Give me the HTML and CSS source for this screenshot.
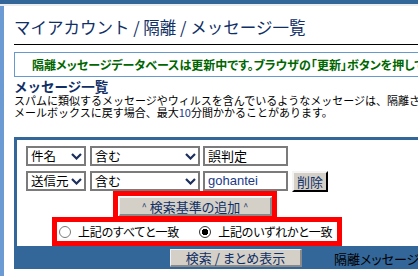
FILE: index.html
```html
<!DOCTYPE html>
<html lang="ja">
<head>
  <meta charset="UTF-8">
  <title>メッセージ一覧</title>
  <link rel="stylesheet" href="styles.css">
</head>
<body>
  <div class="topbar"></div>
  <div class="strip"></div>

  <div class="layout">
    <div class="sidebar"></div>

    <div class="main">
      <h1 class="title">マイアカウント / 隔離 / メッセージ一覧</h1>

      <div class="notice">隔離メッセージデータベースは更新中です。ブラウザの「更新」ボタンを押して最新の状態を表示してください。</div>

      <h2 class="section">メッセージ一覧</h2>
      <p class="desc">スパムに類似するメッセージやウィルスを含んでいるようなメッセージは、隔離されます。隔離されたメッセージを<br>メールボックスに戻す場合、最大<span class="num">10</span>分間かかることがあります。</p>

      <div class="search">
        <div class="search-body">
          <div class="row">
            <div class="sel sel-field"><span>件名</span>
              <svg class="chev" width="11" height="7" viewBox="0 0 11 7"><path d="M1 1 L5.5 5.5 L10 1" fill="none" stroke="#1c2f5c" stroke-width="2.2"/></svg>
            </div>
            <div class="sel sel-op"><span>含む</span>
              <svg class="chev" width="11" height="7" viewBox="0 0 11 7"><path d="M1 1 L5.5 5.5 L10 1" fill="none" stroke="#1c2f5c" stroke-width="2.2"/></svg>
            </div>
            <div class="field">誤判定</div>
          </div>

          <div class="row">
            <div class="sel sel-field"><span>送信元</span>
              <svg class="chev" width="11" height="7" viewBox="0 0 11 7"><path d="M1 1 L5.5 5.5 L10 1" fill="none" stroke="#1c2f5c" stroke-width="2.2"/></svg>
            </div>
            <div class="sel sel-op"><span>含む</span>
              <svg class="chev" width="11" height="7" viewBox="0 0 11 7"><path d="M1 1 L5.5 5.5 L10 1" fill="none" stroke="#1c2f5c" stroke-width="2.2"/></svg>
            </div>
            <div class="field field-value">gohantei</div>
            <button class="btn btn-del">削除</button>
          </div>

          <div class="add-wrap">
            <button class="btn btn-add"><span class="caret">^</span> 検索基準の追加 <span class="caret">^</span></button>
          </div>

          <div class="match-wrap">
            <span class="radio"></span>
            <span class="match-label">上記のすべてと一致</span>
            <span class="radio checked"></span>
            <span class="match-label">上記のいずれかと一致</span>
          </div>
        </div>

        <div class="search-foot">
          <button class="btn btn-search">検索 / まとめ表示</button>
          <span class="foot-text">隔離メッセージの表示件数</span>
        </div>
      </div>
    </div>
  </div>
</body>
</html>
```

FILE: styles.css
```css
body {
  margin: 0;
  background: #fff;
  font-family: "Noto Sans CJK JP", "Liberation Sans", sans-serif;
  font-feature-settings: "palt";
  overflow: hidden;
  width: 418px;
  height: 276px;
}

.topbar {
  height: 4px;
  background: #336699;
}

.strip {
  height: 2px;
  background: #ececec;
}

.layout {
  display: flex;
  height: 270px;
}

.sidebar {
  width: 4px;
  flex: none;
  background: #6b9bd2;
}

.main {
  flex: none;
  width: 700px;
  padding-left: 10px;
}

.title {
  margin: 0;
  padding: 8px 0 4px;
  line-height: 26px;
  font-size: 16.5px;
  font-weight: normal;
  font-feature-settings: normal;
  color: #0f2f66;
  border-bottom: 1px solid #000;
  white-space: nowrap;
}

.notice {
  margin-top: 7px;
  height: 23px;
  line-height: 23px;
  padding-left: 17px;
  border: 1px solid #6699cc;
  border-right: none;
  font-size: 12px;
  font-weight: bold;
  color: #006600;
  white-space: nowrap;
}

.section {
  margin: 2px 0 0;
  line-height: 15px;
  font-size: 13.5px;
  font-weight: bold;
  font-feature-settings: normal;
  color: #0f2f66;
}

.desc {
  margin: 0;
  font-size: 11px;
  line-height: 12px;
  font-feature-settings: normal;
  color: #000;
  white-space: nowrap;
}

.desc .num {
  color: #1a3a8a;
}

.search {
  margin-top: 19px;
  border: 3px solid #336699;
  border-bottom: none;
  border-right: none;
}

.search-body {
  padding: 6px 0 0 9px;
  background: #fff;
}

.row {
  display: flex;
  gap: 4px;
  height: 20px;
  margin-bottom: 5px;
}

.row + .row {
  margin-bottom: 0;
}

.sel,
.field {
  box-sizing: border-box;
  height: 20px;
  border: 2px solid #7b7b7b;
  font-size: 13px;
  line-height: 16px;
  padding-left: 3px;
  color: #000;
  background: #fff;
  white-space: nowrap;
}

.sel {
  display: flex;
  align-items: center;
  justify-content: space-between;
  padding: 0 2px 0 3px;
}

.sel-field {
  width: 60px;
  font-size: 12.5px;
}

.chev {
  flex: none;
}

.sel-op {
  width: 110px;
}

.field {
  width: 85px;
  margin-left: -1px;
}

.field-value {
  color: #1a3a8a;
  font-family: "Liberation Sans", sans-serif;
}

.btn {
  font-family: "Noto Sans CJK JP", "Liberation Sans", sans-serif;
  font-feature-settings: "palt";
  font-size: 13px;
  color: #0f2f66;
  background: #d4d0c8;
  padding: 0;
  border: 2px solid;
  border-color: #fff #404040 #404040 #fff;
  box-sizing: border-box;
  white-space: nowrap;
}

.btn-del {
  width: 36px;
  height: 21px;
  line-height: 16px;
  border-color: #f4f4f4 #000 #000 #f4f4f4;
}

.add-wrap {
  display: flex;
  width: 164px;
  height: 30px;
  box-sizing: border-box;
  margin-left: 87px;
  padding: 1px 0 0 1px;
  border: 5px solid #ff0000;
}

.btn-add {
  width: 153px;
  height: 19px;
  line-height: 15px;
  border-width: 1px 2px 2px 1px;
  border-color: #f0f0f0 #8a8a8a #8a8a8a #f0f0f0;
}

.caret {
  font-size: 9px;
  vertical-align: 2px;
}

.match-wrap {
  display: flex;
  align-items: center;
  width: 290px;
  height: 29px;
  box-sizing: border-box;
  margin: -4px 0 0 26px;
  padding-left: 2px;
  border: 5px solid #ff0000;
  font-size: 12px;
  letter-spacing: -0.2px;
  color: #000;
}

.radio {
  width: 12px;
  height: 12px;
  box-sizing: border-box;
  border: 1px solid #7a7a7a;
  border-radius: 50%;
  background: #fff;
  flex: none;
}

.radio.checked {
  border-color: #333;
  background: radial-gradient(circle, #000 0 3px, #fff 3.5px);
  margin-left: 20px;
}

.match-label {
  margin-left: 7px;
  line-height: 16px;
  white-space: nowrap;
}

.search-foot {
  display: flex;
  align-items: flex-start;
  height: 23px;
  box-sizing: border-box;
  padding: 3px 0 0 156px;
  margin-left: -3px;
  background: #336699;
}

.btn-search {
  width: 132px;
  height: 18px;
  line-height: 14px;
  border-width: 1px 2px 2px 1px;
  border-color: #f0f0f0 #8a8a8a #8a8a8a #f0f0f0;
}

.foot-text {
  margin-left: 32px;
  margin-top: 2px;
  font-size: 13px;
  line-height: 16px;
  color: #000;
  white-space: nowrap;
}
```
